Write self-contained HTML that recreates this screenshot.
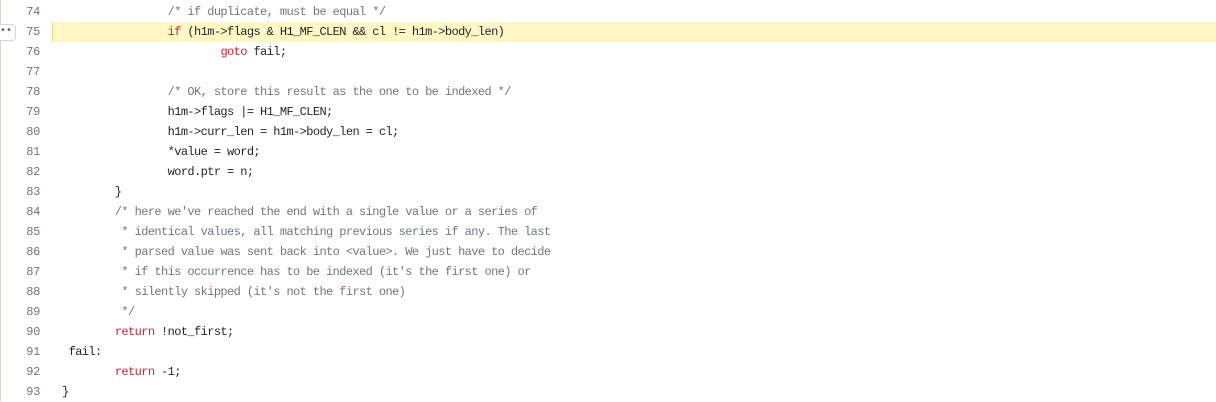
<!DOCTYPE html>
<html><head><style>
body{margin:0;background:#fff;width:1216px;height:401px;overflow:hidden;font-family:"Liberation Mono",monospace;font-size:12px;}
.w{position:absolute;left:0;top:2px;width:1216px;height:400px;}
.l{position:absolute;left:0;width:1216px;height:20px;line-height:20px;}
.n{position:absolute;left:0;width:40px;text-align:right;color:#6e7781;letter-spacing:-0.3px;}
.c{position:absolute;left:62px;white-space:pre;color:#1f2328;letter-spacing:-0.6px;}
.hl{background:#fff8c5;left:52px;width:1164px;border-left:1px solid #eed888;}
.cm{color:#6e7781}.k{color:#cf222e}
</style></head><body>
<div style="position:absolute;left:0;top:0;width:1px;height:401px;background:#d0d7de"></div>
<div class="w">
<div class="l hl" style="top:20px"></div>
<div style="position:absolute;left:-4px;top:22px;width:18px;height:15px;border:1px solid #d0d7de;border-radius:4px;background:#fff;color:#57606a;font-size:10px;line-height:13px;text-align:center">••</div>
<div class="l" style="top:0"><span class="n">74</span><span class="c">                <span class="cm">/* if duplicate, must be equal */</span></span></div>
<div class="l" style="top:20px"><span class="n">75</span><span class="c">                <span class="k">if</span> (h1m-&gt;flags &amp; H1_MF_CLEN &amp;&amp; cl != h1m-&gt;body_len)</span></div>
<div class="l" style="top:40px"><span class="n">76</span><span class="c">                        <span class="k">goto</span> fail;</span></div>
<div class="l" style="top:60px"><span class="n">77</span></div>
<div class="l" style="top:80px"><span class="n">78</span><span class="c">                <span class="cm">/* OK, store this result as the one to be indexed */</span></span></div>
<div class="l" style="top:100px"><span class="n">79</span><span class="c">                h1m-&gt;flags |= H1_MF_CLEN;</span></div>
<div class="l" style="top:120px"><span class="n">80</span><span class="c">                h1m-&gt;curr_len = h1m-&gt;body_len = cl;</span></div>
<div class="l" style="top:140px"><span class="n">81</span><span class="c">                *value = word;</span></div>
<div class="l" style="top:160px"><span class="n">82</span><span class="c">                word.ptr = n;</span></div>
<div class="l" style="top:180px"><span class="n">83</span><span class="c">        }</span></div>
<div class="l" style="top:200px"><span class="n">84</span><span class="c cm">        /* here we've reached the end with a single value or a series of</span></div>
<div class="l" style="top:220px"><span class="n">85</span><span class="c cm">         * identical values, all matching previous series if any. The last</span></div>
<div class="l" style="top:240px"><span class="n">86</span><span class="c cm">         * parsed value was sent back into &lt;value&gt;. We just have to decide</span></div>
<div class="l" style="top:260px"><span class="n">87</span><span class="c cm">         * if this occurrence has to be indexed (it's the first one) or</span></div>
<div class="l" style="top:280px"><span class="n">88</span><span class="c cm">         * silently skipped (it's not the first one)</span></div>
<div class="l" style="top:300px"><span class="n">89</span><span class="c cm">         */</span></div>
<div class="l" style="top:320px"><span class="n">90</span><span class="c">        <span class="k">return</span> !not_first;</span></div>
<div class="l" style="top:340px"><span class="n">91</span><span class="c"> fail:</span></div>
<div class="l" style="top:360px"><span class="n">92</span><span class="c">        <span class="k">return</span> -1;</span></div>
<div class="l" style="top:380px"><span class="n">93</span><span class="c">}</span></div>
</div>
</body></html>
